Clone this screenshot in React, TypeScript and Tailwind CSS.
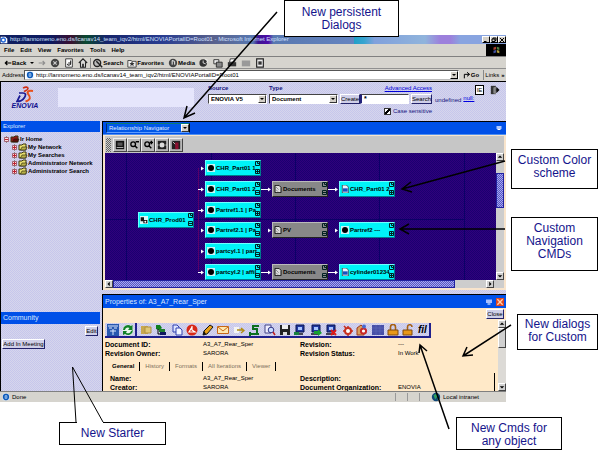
import React from "react";

type Kids = { children?: React.ReactNode };

const lavender =
  "bg-[conic-gradient(#c6c6ec_25%,#d6d6ec_0_50%,#c6c6ec_0_75%,#d6d6ec_0)] bg-[length:2px_2px]";
const thumb =
  "bg-[conic-gradient(#a0a0ff_25%,#5c5cb4_0_50%,#a0a0ff_0_75%,#5c5cb4_0)] bg-[length:2px_2px]";

/* ---------- small building blocks ---------- */

function Svg({ size = "size-3", children }: Kids & { size?: string }) {
  return (
    <svg viewBox="0 0 12 12" className={`${size} shrink-0`} aria-hidden="true" fill="none">
      {children}
    </svg>
  );
}

function DropDown({ id, label, value, className, dark }: { id: string; label: string; value: string; className: string; dark?: boolean }) {
  return (
    <div className={`relative flex ${className}`}>
      <select
        id={id}
        aria-label={label}
        className={`w-full appearance-none rounded-none pl-0.5 text-[6px] leading-[8px] outline-none ${
          dark
            ? "border border-t-[#0a7a70] border-r-black border-b-[#5c9cff] border-l-[#003070] bg-[#0058e8] text-[#e4eeff]"
            : "border border-t-[#444] border-r-white border-b-white border-l-[#444] bg-white font-bold text-black"
        }`}
      >
        <option>{value}</option>
      </select>
      <span className="pointer-events-none absolute inset-y-px right-px flex w-2 items-center justify-center border border-t-white border-r-[#333] border-b-[#333] border-l-white bg-[#d4d0c8]">
        <span className="border-x-2 border-t-2 border-x-transparent border-t-black" />
      </span>
    </div>
  );
}

function Push({ children, className = "" }: Kids & { className?: string }) {
  return (
    <button
      className={`border border-t-white border-r-[#22226a] border-b-[#22226a] border-l-white bg-[#cfcfe8] text-[6px] leading-[8px] whitespace-nowrap text-black ${className}`}
    >
      {children}
    </button>
  );
}

function ScrollButton({ dir }: { dir: "up" | "down" | "left" | "right" }) {
  const points = {
    up: "1,5 7,5 4,2",
    down: "1,3 7,3 4,6",
    left: "5,1 5,7 2,4",
    right: "3,1 3,7 6,4",
  }[dir];
  return (
    <button
      aria-label={`Scroll ${dir}`}
      className="flex size-2 shrink-0 items-center justify-center border border-t-white border-r-[#444] border-b-[#444] border-l-white bg-[#d0d0d0]"
    >
      <svg viewBox="0 0 8 8" className="size-1.5">
        <polygon points={points} fill="black" />
      </svg>
    </button>
  );
}

/* ---------- browser chrome ---------- */

function TitleBar() {
  return (
    <div className="flex h-[9px] items-center bg-[linear-gradient(90deg,#102060_0%,#0c1a60_10%,#3a1030_14%,#0a4a30_17%,#16246a_21%,#283c90_32%,#58608c_42%,#5878b0_50%,#3c1490_51%,#4c0ca8_53%,#5878b0_54%,#6484c0_70%,#7098cc_68%,#6c90c8_67%,#20a0c8_69%,#38a4d0_72%,#80a0dc_74%,#90b4dc_84%,#9c80dc_87%,#9c80dc_89%,#88a4e0_91%)] text-[#d4e0ff]">
      <Svg size="size-2">
        <path d="M1 1h7l3 3v7H1z" fill="#fff" />
        <circle cx="5" cy="6" r="3" stroke="#2468d8" strokeWidth="2" />
      </Svg>
      <span className="min-w-0 flex-1 pl-0.5 text-[6px] leading-[9px] whitespace-nowrap">
        http://lannomeno.eno.ds/lcanav14_team_iqv2/html/ENOVIAPortalID=Root01 - Microsoft Internet Explorer
      </span>
      <div className="flex">
        {["M2 9h5", "M2 4h6v5H2zM4 4V2h6v5H8", "M2 2l8 8M10 2l-8 8"].map((d) => (
          <button
            key={d}
            aria-label="Window control"
            className="flex h-[7px] w-2 items-center justify-center border border-t-white border-r-black border-b-black border-l-white bg-[#d4d0c8]"
          >
            <Svg size="size-1.5">
              <path d={d} stroke="black" strokeWidth="2" />
            </Svg>
          </button>
        ))}
      </div>
    </div>
  );
}

function MenuBar() {
  return (
    <div className="flex h-[13px] items-stretch border-b border-[#808080] bg-[#d6d4ce]">
      <nav className="flex flex-1 items-center gap-1.5 pl-1">
        {["File", "Edit", "View", "Favorites", "Tools", "Help"].map((m) => (
          <button key={m} className="text-[6px] leading-[8px] font-bold">
            {m}
          </button>
        ))}
      </nav>
      <div className="flex w-5 items-center justify-center bg-black">
        <Svg size="size-2.5">
          <path d="M3 3l3-1v3L3 6z" fill="#b04030" />
          <path d="M7 2l3 1v3L7 5z" fill="#508040" />
          <path d="M3 7l3-1v3l-3 1z" fill="#4050a0" />
          <path d="M7 6l3 1v3L7 9z" fill="#b0a040" />
        </Svg>
      </div>
    </div>
  );
}

function ToolItem({ label, children }: Kids & { label?: string }) {
  return (
    <button className="flex items-center text-[6px] leading-[8px] font-bold" aria-label={label ?? "Tool"}>
      {children}
      {label}
    </button>
  );
}

function NavBar() {
  return (
    <div className="flex h-3 items-center gap-1 border-b border-[#909090] bg-[#d6d4ce] pl-1">
      <ToolItem label="Back">
        <Svg size="size-2">
          <path d="M11 6H2M5 3L2 6l3 3" stroke="black" strokeWidth="1.8" />
        </Svg>
      </ToolItem>
      <span className="border-x-2 border-t-2 border-x-transparent border-t-black" />
      <Svg size="size-2">
        <path d="M1 6h9M7 3l3 3-3 3" stroke="#909090" strokeWidth="1.8" />
      </Svg>
      <ToolItem>
        <Svg size="size-2.5">
          <circle cx="6" cy="6" r="5" fill="#444" />
          <path d="M4 4l4 4M8 4L4 8" stroke="#ccc" strokeWidth="1.4" />
        </Svg>
      </ToolItem>
      <ToolItem>
        <Svg size="size-2.5">
          <path d="M2 1h8v10H2z" fill="#fff" stroke="#222" />
          <path d="M4 7a2 2 0 104-1M8 3v3H5" stroke="#222" strokeWidth="1.3" />
        </Svg>
      </ToolItem>
      <ToolItem>
        <Svg size="size-2.5">
          <path d="M1 6l5-5 5 5M3 5v6h6V5" fill="#ddd" stroke="#222" strokeWidth="1.3" />
          <path d="M5 7h2v4H5z" fill="#222" />
        </Svg>
      </ToolItem>
      <span className="-mx-0.5 h-2.5 w-px bg-[#888]" />
      <ToolItem label="Search">
        <Svg size="size-2.5">
          <circle cx="5" cy="6" r="4.2" fill="#bbb" stroke="#222" strokeWidth="1.6" />
          <path d="M4 4l3 3M7 7l4 4" stroke="#222" strokeWidth="1.8" />
        </Svg>
      </ToolItem>
      <ToolItem label="Favorites">
        <Svg size="size-2.5">
          <path d="M1 3h4l1 1h5v7H1z" fill="#eee" stroke="#333" />
          <path d="M6 4l1 2h2L7.500 7.500 8 10 6 8.500 4 10l.5-2.500L3 6h2z" fill="#333" />
        </Svg>
      </ToolItem>
      <ToolItem label="Media">
        <Svg size="size-2.5">
          <circle cx="6" cy="6" r="5" fill="#444" />
          <path d="M5 3v5M5 3l3 1v4" stroke="#eee" strokeWidth="1.2" />
        </Svg>
      </ToolItem>
      <ToolItem>
        <Svg size="size-2.5">
          <circle cx="5" cy="6" r="4.500" fill="#333" />
          <path d="M5 3v3l3 1M7 1l4 2-2 3" stroke="#eee" />
        </Svg>
      </ToolItem>
      <ToolItem>
        <Svg size="size-2.5">
          <path d="M1 2h6v5H1z" fill="#eee" stroke="#222" />
          <path d="M4 5h7v6H4z" fill="#888" stroke="#222" />
        </Svg>
      </ToolItem>
      <ToolItem>
        <Svg size="size-2.5">
          <path d="M4 1h6L9 5H3z" fill="#fff" stroke="#222" />
          <path d="M1 5h10v5H1z" fill="#333" />
        </Svg>
      </ToolItem>
      <ToolItem>
        <Svg size="size-2.5">
          <path d="M1 3h10v7H1z" fill="#999" />
        </Svg>
      </ToolItem>
      <ToolItem>
        <Svg size="size-2.5">
          <path d="M2 1h8v10H2z" fill="#eee" stroke="#222" strokeWidth="1.4" />
          <path d="M4 4h4v4H4z" fill="#333" />
        </Svg>
      </ToolItem>
    </div>
  );
}

function IeIcon() {
  return (
    <Svg size="size-2">
      <path d="M1 1h9l1 2v8H1z" fill="#cfe4ff" />
      <circle cx="6" cy="6" r="3.600" stroke="#0a58b8" strokeWidth="2.200" />
      <path d="M3 6h6" stroke="#0a58b8" strokeWidth="1.400" />
    </Svg>
  );
}

function AddressBar() {
  return (
    <div className="flex h-3 items-center bg-[#d6d4ce] pl-0.5">
      <label htmlFor="address" className="w-[22px] text-[6px] leading-[8px]">
        Address
      </label>
      <div className="flex h-2.5 min-w-0 flex-1 items-center gap-0.5 border border-t-[#555] border-r-white border-b-[#bbb] border-l-[#555] bg-white pl-px">
        <IeIcon />
        <input
          id="address"
          readOnly
          defaultValue="http://lannomeno.eno.ds/lcanav14_team_iqv2/html/ENOVIAPortalID=Root01"
          className="h-2 min-w-0 flex-1 bg-transparent text-[6px] leading-[8px] outline-none"
        />
        <button
          aria-label="Show addresses"
          className="flex size-2 items-center justify-center border border-t-white border-r-black border-b-black border-l-white bg-[#d4d0c8]"
        >
          <span className="border-x-2 border-t-2 border-x-transparent border-t-black" />
        </button>
      </div>
      <button className="flex w-6 items-center justify-center text-[6px] leading-[8px] font-bold">
        <Svg size="size-2">
          <path d="M2 11V5h7M6 2l4 3-4 3" stroke="black" strokeWidth="1.500" />
        </Svg>
        Go
      </button>
      <button className="flex h-2.5 w-[23px] items-center justify-center gap-0.5 border-l border-[#888] text-[6px] leading-[8px]">
        Links <span className="font-bold">»</span>
      </button>
    </div>
  );
}

/* ---------- application header ---------- */

function Logo() {
  return (
    <div className="flex w-8 flex-col items-center text-[#10108c]">
      <svg viewBox="0 0 18 17" className="h-[17px] w-[18px]" fill="none" aria-hidden="true">
        <path d="M7 2c3-1.500 5-1 5 .5C12 4 9.500 4.500 8 5.500" stroke="#d03018" strokeWidth="1.600" />
        <path d="M3 7h4c3 0 3 2 1.500 4.500S4 15.500 1 15.500l3-6" stroke="#1c1c94" strokeWidth="1.700" />
        <path d="M17 5c-5-1-6.500 1-4.500 3.500S15 14 9.500 15.500" stroke="#e8501c" strokeWidth="2" />
      </svg>
      <span className="text-[7px] leading-[6px] font-bold italic">ENOVIA</span>
    </div>
  );
}

function AppHeader() {
  const label = "text-[6px] leading-[8px] font-bold text-[#14147c]";
  return (
    <header className={`flex h-10 border-t border-l border-black ${lavender}`}>
      <div className="w-[57px] pt-1 pl-2">
        <Logo />
      </div>
      <div className="mt-1.5 h-[19px] min-w-0 flex-1 bg-[#e6e6fc]" />
      <form className="ml-3.5 w-[224px]" onSubmit={(e) => e.preventDefault()}>
        <div className="flex pt-0.5">
          <label htmlFor="source" className={`w-[61px] ${label}`}>
            Source
          </label>
          <label htmlFor="type" className={`flex-1 ${label}`}>
            Type
          </label>
          <a href="#advanced" className="text-[6px] leading-[8px] text-[#0000d8] underline">
            Advanced Access
          </a>
        </div>
        <div className="mt-0.5 flex h-2.5 items-stretch">
          <DropDown id="source" label="Source" value="ENOVIA V5" className="w-[59px]" />
          <DropDown id="type" label="Type" value="Document" className="ml-0.5 w-[69px]" />
          <Push className="ml-0.5 w-5">Create</Push>
          <input
            aria-label="Search text"
            defaultValue="*"
            className="min-w-0 flex-1 rounded-none border border-l-2 border-t-[#444] border-r-white border-b-white border-l-[#22227a] bg-white px-0.5 text-[7px] font-bold outline-none"
          />
          <Push className="ml-0.5 w-[21px]">Search</Push>
        </div>
        <div className="mt-[3px] flex items-center justify-end gap-0.5">
          <input
            id="case"
            type="checkbox"
            defaultChecked
            className="size-[7px] appearance-none border border-[#333] bg-white bg-[linear-gradient(135deg,transparent_35%,black_35%_65%,transparent_65%)]"
          />
          <label htmlFor="case" className="text-[6px] leading-[8px] text-[#14147c]">
            Case sensitive
          </label>
        </div>
      </form>
      <div className="flex w-[74px] items-start pr-1.5 pl-[3px]">
        <span className="pt-3.5 text-[6px] leading-[8px] text-[#14147c]">undefined</span>
        <a href="#null" className="pt-3 pl-0.5 text-[6px] leading-[8px] text-[#0000e0] underline">
          null:
        </a>
        <button className="mt-[3px] ml-auto flex h-2.5 w-[9px] items-center justify-center border border-black bg-white text-[6px] leading-[8px]">
          IE
        </button>
        <button aria-label="Exit" className="mt-[3px] ml-1.5">
          <Svg size="size-2.5">
            <path d="M1 1h6v10H1z" fill="#333" />
            <path d="M4 3l3-1v9l-3-1z" fill="#888" />
            <path d="M7 6h2M8 3l3 3-3 3z" fill="#111" stroke="#111" />
          </Svg>
        </button>
      </div>
    </header>
  );
}

/* ---------- left column ---------- */

function Expander({ open }: { open?: boolean }) {
  return (
    <svg viewBox="0 0 7 7" className="size-[7px] shrink-0" aria-hidden="true">
      <path d="M3.500 0v7" stroke="#888" />
      <path d="M1.500 1.500h4v4h-4z" fill="#fbdcdc" stroke="#a06070" />
      <path d={open ? "M2 3.500h3" : "M2 3.500h3M3.500 2v3"} stroke="#c02030" />
    </svg>
  );
}

function Folder({ red }: { red?: boolean }) {
  return (
    <svg viewBox="0 0 10 8" className="h-2 w-2.5 shrink-0" aria-hidden="true">
      <path d="M1 2h3l1-1h3v6H1z" fill={red ? "#901818" : "#e8e070"} stroke="#3a3410" />
      <path d="M2.500 7l1.500-3h5L7.500 7z" fill={red ? "#5c0c0c" : "#b8b048"} stroke="#201c08" strokeWidth=".6" />
    </svg>
  );
}

function Explorer() {
  return (
    <section className="flex flex-1 flex-col">
      <h2 className="h-[11px] bg-[#0050e8] pl-0.5 text-[6px] leading-[11px] text-[#dce8ff]">Explorer</h2>
      <ul className="pt-[3px] text-[6px] leading-[8px] font-bold whitespace-nowrap">
        <li>
          <div className="flex h-2 items-center pl-0.5">
            <Expander open />
            <Folder red />
            Ir Home
          </div>
          <ul>
            {["My Network", "My Searches", "Administrator Network", "Administrator Search"].map((t) => (
              <li key={t} className="flex h-2 items-center pl-2.5">
                <Expander />
                <Folder />
                {t}
              </li>
            ))}
          </ul>
        </li>
      </ul>
    </section>
  );
}

function Community() {
  return (
    <section className="h-[79px]">
      <h2 className="h-3 bg-[#0050e8] pl-0.5 text-[7px] leading-3 text-[#dce8ff]">Community</h2>
      <div className="flex justify-end pt-0.5 pr-0.5">
        <Push className="h-2.5 w-[13px]">Edit</Push>
      </div>
      <Push className="mt-[3px] ml-px block h-2.5 w-[43px]">Add In Meeting</Push>
    </section>
  );
}

/* ---------- navigator ---------- */

type GraphNode = { x: number; y: number; text: string; kind: "part" | "doc" | "grey" | "root"; plus?: boolean };

const nodes: GraphNode[] = [
  { x: 33, y: 59, text: "CHR_Prod01", kind: "root" },
  { x: 100, y: 7, text: "CHR_Part01 1", kind: "part", plus: true },
  { x: 100, y: 28, text: "CHR_Part01 2", kind: "part" },
  { x: 100, y: 49, text: "Partref1.1 | Pa", kind: "part", plus: true },
  { x: 100, y: 69, text: "Partref2.1 | Pa", kind: "part" },
  { x: 100, y: 90, text: "partcyl.1 | part", kind: "part" },
  { x: 100, y: 111, text: "partcyl.2 | affil", kind: "part" },
  { x: 167, y: 28, text: "Documents", kind: "grey" },
  { x: 167, y: 69, text: "PV", kind: "grey" },
  { x: 167, y: 111, text: "Documents", kind: "grey" },
  { x: 234, y: 28, text: "CHR_Part01 2", kind: "doc", plus: true },
  { x: 234, y: 69, text: "Partref2 ---", kind: "part", plus: true },
  { x: 234, y: 111, text: "cylinder01234", kind: "doc", plus: true },
];

const nodeIcons: Record<GraphNode["kind"], React.ReactNode> = {
  part: (
    <>
      <path d="M0 0h12v12H0z" fill="#c8f4f4" />
      <circle cx="6" cy="6" r="4.500" fill="#000" />
    </>
  ),
  doc: (
    <>
      <path d="M2 0h6l3 3v9H2z" fill="#e8f4ff" stroke="#222" />
      <path d="M3 5h7v5H3z" fill="#1850c0" />
    </>
  ),
  grey: (
    <>
      <path d="M1.500.5h6l3 3v8h-9z" fill="#ddd" stroke="#111" strokeWidth="1.500" />
      <path d="M3 3l4 4M3 7l3 3" stroke="#666" />
    </>
  ),
  root: (
    <>
      <path d="M0 0h12v12H0z" fill="#d8f8f8" />
      <path d="M1 2h5v6H1zM5 6h6v5H5z" fill="#111" />
      <circle cx="8" cy="8.500" r="1.500" fill="#fff" />
    </>
  ),
};

function NodeBox({ n }: { n: GraphNode }) {
  const grey = n.kind === "grey";
  return (
    <button
      style={{ left: n.x, top: n.y }}
      className={`absolute flex h-4 w-14 items-center border pl-px text-left ${
        grey
          ? "border-t-[#bbb] border-r-[#222] border-b-[#222] border-l-[#bbb] bg-[#888]"
          : "border-t-[#70ffff] border-r-[#007a8c] border-b-[#007a8c] border-l-[#70ffff] bg-[#00f4f8]"
      }`}
    >
      <Svg size="size-2">{nodeIcons[n.kind]}</Svg>
      <span className="min-w-0 flex-1 pl-px text-[6px] leading-[9px] font-bold whitespace-nowrap">{n.text}</span>
      <svg viewBox="0 0 5 14" className="h-3.5 w-[5px] shrink-0" fill="none" aria-hidden="true">
        <path d="M.5.5h4v4h-4zM2.500.5v2h2M.5 8.500h4v4h-4zM1 10.500h3" stroke="#022" />
        {n.plus && <path d="M2.500 9v3" stroke="#022" />}
      </svg>
    </button>
  );
}

function GraphCanvas() {
  return (
    <div className="relative h-[127px] min-w-0 flex-1 overflow-hidden bg-[conic-gradient(#30007c_25%,#1a0070_0_50%,#30007c_0_75%,#1a0070_0)] bg-[length:2px_2px]">
      <svg className="absolute inset-0 size-full" fill="none" aria-hidden="true">
        <path d="M21.500 0v127M106.500 0v127M190.500 0v127M274.500 0v127M359.500 0v127M0 66.500h359" stroke="#0c0068" />
        <path d="M93.500 15v103" stroke="#580068" />
        <path d="M93 36.500h4M93 57.500h4M93 119.500h4M155 36.500h9M155 119.500h9M223 36.500h8M223 119.500h8" stroke="#fff" />
        {[
          [96, 15], [96, 36], [96, 57], [96, 77], [96, 98], [96, 119],
          [163, 36], [163, 77], [163, 119], [230, 36], [230, 77], [230, 119],
        ].map(([x, y]) => (
          <path key={`${x}-${y}`} d={`M${x} ${y - 1.5}l3 2-3 2z`} fill="#fff" />
        ))}
      </svg>
      {nodes.map((n) => (
        <NodeBox key={`${n.x}-${n.y}`} n={n} />
      ))}
    </div>
  );
}

function Navigator() {
  const tools = [
    <g key="a"><path d="M1 1h10v10H1z" fill="#111" /><path d="M3 3h6v4H3z" fill="#555" /><path d="M2 9h8" stroke="#ccc" /></g>,
    <g key="b"><circle cx="5" cy="5" r="2.800" stroke="#000" strokeWidth="1.600" /><path d="M7 7l3 3M8 2h4" stroke="#000" strokeWidth="1.800" /></g>,
    <g key="c"><circle cx="5" cy="5" r="2.800" stroke="#000" strokeWidth="1.600" /><path d="M7 7l3 3M8 3h4M10 1v4" stroke="#000" strokeWidth="1.600" /></g>,
    <g key="d"><path d="M1 1h10v10H1z" fill="#222" /><circle cx="6" cy="6" r="3" fill="#ddd" /><path d="M0 6h2M10 6h2" stroke="#ddd" /></g>,
    <g key="e"><path d="M1 1h10v10H1z" fill="#222" /><path d="M5 3h4v8H5z" fill="#8c1030" /><path d="M2 2l3 3" stroke="#ddd" /></g>,
  ];
  return (
    <section className="border-t border-l border-black bg-[#f8e4cc]">
      <div className="flex h-[13px] items-center justify-between border-b border-[#5090f0] bg-[#0050e8] pr-1 pl-[3px]">
        <DropDown dark id="view" label="View" value="Relationship Navigator" className="w-[84px]" />
        <Svg size="size-1.5">
          <path d="M1 2h10v6H1z" fill="#b0c8ff" />
          <path d="M3 9h6" stroke="#fff" strokeWidth="2" />
        </Svg>
      </div>
      <div className="px-0.5 pt-px pb-0.5">
        <div className="flex h-[17px] items-center bg-[#c6c6c6]">
          <span className="mr-0.5 ml-px h-3.5 w-[5px] bg-[conic-gradient(#666_25%,#ccc_0_50%,#666_0_75%,#ccc_0)] bg-[length:2px_2px]" />
          {tools.map((t, i) => (
            <button
              key={i}
              aria-label={`View tool ${i + 1}`}
              className="flex h-3.5 w-[14px] items-center justify-center border border-t-[#eee] border-r-[#444] border-b-[#444] border-l-[#eee] bg-[#b8b8b8]"
            >
              <Svg size="size-2.5">{t}</Svg>
            </button>
          ))}
        </div>
        <div className="flex">
          <GraphCanvas />
          <div className="flex w-2 flex-col bg-[#cdcdcd]">
            <ScrollButton dir="up" />
            <div className="h-3" />
            <div className={`h-[35px] border border-[#2020a0] ${thumb}`} />
            <div className="flex-1" />
            <ScrollButton dir="down" />
          </div>
        </div>
        <div className="flex h-2 bg-[#cdcdcd]">
          <ScrollButton dir="left" />
          <div className={`flex-1 border border-[#2020a0] ${thumb}`} />
          <div className="w-[31px]" />
          <ScrollButton dir="right" />
          <div className="w-2.5" />
        </div>
      </div>
    </section>
  );
}

/* ---------- properties dialog ---------- */

const pc = (
  <>
    <path d="M2 1h8v7H2z" fill="#2038a0" stroke="#0c1450" />
    <path d="M4 3h4v3H4z" fill="#a8c4ff" />
    <path d="M1 9h8v2H1z" fill="#445" />
  </>
);

const commandIcons: React.ReactNode[] = [
  <g key="paste"><path d="M1 2h7v8H1z" fill="#c8a850" /><path d="M5 3h6v6H5z" fill="#e0c878" stroke="#b09040" /></g>,
  <g key="tree"><path d="M1 1h4l2 3-3 2-3-1z" fill="#108020" /><path d="M4 5h6v3H4z" fill="#208030" /><path d="M5 8h6v3H5z" fill="#101860" /><path d="M3 5v5h2" stroke="#000" /></g>,
  <g key="copy"><path d="M2 1h4l2 2v5H2z" fill="#dde4ff" stroke="#3040b0" /><path d="M5 4h4l2 2v5H5z" fill="#f4f6ff" stroke="#3040b0" /></g>,
  <g key="clock"><circle cx="6" cy="6" r="5.500" fill="#d82818" /><path d="M6 2v4l3 2H3l3-5" stroke="#fff" strokeWidth="1.200" /></g>,
  <g key="pencil"><path d="M1 11l1-4 6-6 3 2-6 7z" fill="#e8a018" stroke="#111" /><path d="M1 11l1-4 2 3z" fill="#111" /></g>,
  <g key="mail"><path d="M.5 2.500h11v7H.5z" fill="#ffe8b0" stroke="#c86818" /><path d="M1 3l5 4 5-4" stroke="#c86818" /></g>,
  <g key="out"><path d="M1 3h5v6H1z" fill="#f4f4f4" /><path d="M4 6h6M8 4l3 2.500L8 9" stroke="#b08c10" strokeWidth="1.400" /></g>,
  <g key="flow"><path d="M2 10h7V5H5V2h6M9 10H11M2 8v4" stroke="#0c7020" strokeWidth="2" /></g>,
  <g key="find"><path d="M1 1h6v8H1z" fill="#eef" stroke="#444488" /><circle cx="7" cy="6" r="2.800" fill="#c8dcff" stroke="#333388" /><path d="M9 8l2 3" stroke="#c02020" strokeWidth="1.500" /></g>,
  <g key="save"><path d="M1 1h10v10H1z" fill="#222" /><path d="M3 1h6v4H3z" fill="#eee" /><path d="M4 8h4v3H4z" fill="#ddd" /></g>,
  <g key="pc1">{pc}<path d="M0 8h5v3H0z" fill="#188040" /></g>,
  <g key="pc2">{pc}<path d="M4 7h4V5l4 4-4 3v-2H4z" fill="#18a030" /></g>,
  <g key="pc3">{pc}<path d="M6 6l5 5M11 6l-5 5" stroke="#e01818" strokeWidth="2" /></g>,
  <g key="gear"><circle cx="7" cy="7" r="3" fill="#fff" stroke="#c83020" strokeWidth="2" /><path d="M3 2l2 2M7 2v2M2 7h2M7 10v2M10 7h2" stroke="#c83020" strokeWidth="1.500" /></g>,
  <g key="gears"><path d="M1 4l4-3 3 3v7H1z" fill="#d8a060" stroke="#a03818" /><circle cx="7.500" cy="7" r="2.600" fill="#fff" stroke="#c82828" strokeWidth="2" /><circle cx="8" cy="2.500" r="2" fill="#4868d0" /></g>,
  <g key="grid"><path d="M0 1h12v10H0z" fill="#4850a8" /><path d="M0 4h12M0 7h12M4 1v10M8 1v10" stroke="#6068b8" strokeWidth=".6" /></g>,
  <g key="lock"><path d="M3.500 6V3a2.500 2.500 0 015 0v3" stroke="#a86010" strokeWidth="1.600" /><path d="M1 6h10v5H1z" fill="#e89818" stroke="#80480c" /></g>,
  <g key="unlock"><path d="M5.500 6V3a2.200 2.200 0 014.500 0" stroke="#a86010" strokeWidth="1.600" /><path d="M1 6h9v5H1z" fill="#e89818" stroke="#80480c" /></g>,
];

function CommandBar() {
  return (
    <div className="flex">
      <div className={`flex h-[15px] w-8 items-center justify-around border-r-2 border-b-2 border-[#20208c] ${lavender}`}>
        <button aria-label="Home view">
          <Svg>
            <path d="M0 0h12v12H0z" fill="#2858b0" />
            <path d="M1 2h10M2 4h3M7 4h3M3 7h6M6 5v6" stroke="#dce8ff" />
          </Svg>
        </button>
        <button aria-label="Refresh">
          <Svg>
            <circle cx="6" cy="6" r="5.500" fill="#e8f8e8" />
            <path d="M1 6a5 5 0 018-4l1.500-1v5H6l1.500-2A3 3 0 003 6zM11 6a5 5 0 01-8 4l-2 1V7h4L4 8.500A3 3 0 009 7z" fill="#108028" />
          </Svg>
        </button>
      </div>
      <div className={`flex h-[15px] w-[294px] items-center justify-between border-r-2 border-b-2 border-[#20208c] pr-0.5 pl-[3px] ${lavender}`}>
        {commandIcons.map((icon, i) => (
          <button key={i} aria-label={`Command ${i + 1}`}>
            <Svg>{icon}</Svg>
          </button>
        ))}
        <button className="text-[10px] leading-3 font-bold italic">fil</button>
      </div>
    </div>
  );
}

function Field({ a, av, b, bv, inset }: { a: string; av: string; b: string; bv: string; inset?: boolean }) {
  return (
    <div className="grid grid-cols-[98px_97px_98px_1fr] text-[7px] leading-[9px]">
      <dt className={`font-bold ${inset ? "pl-[5px]" : ""}`}>{a}</dt>
      <dd className="text-[6px]">{av}</dd>
      <dt className="font-bold">{b}</dt>
      <dd className="text-[6px]">{bv}</dd>
    </div>
  );
}

function Properties() {
  return (
    <section className="mt-1 flex flex-1 flex-col border-t border-l border-black bg-[#ffe9c8]">
      <div className="flex h-[13px] shrink-0 items-center gap-1 bg-[#0050e8] pr-0.5 pl-0.5">
        <h2 className="flex-1 text-[7px] leading-[13px] text-[#dce8ff]">Properties of: A3_A7_Rear_Sper</h2>
        <button aria-label="Restore">
          <Svg size="size-1.5">
            <path d="M0 1h12v7H0z" fill="#a8c0ff" />
            <path d="M3 10h6" stroke="#fff" strokeWidth="2" />
          </Svg>
        </button>
        <button aria-label="Close window">
          <Svg size="size-2">
            <path d="M0 0h12v12H0z" fill="#e04820" />
            <path d="M2 2l8 8M10 2l-8 8" stroke="#ffd0b0" strokeWidth="2" />
          </Svg>
        </button>
      </div>
      <div className="flex h-3 justify-end pt-px pr-0.5 pb-px">
        <Push className="w-[18px]">Close</Push>
      </div>
      <div className="flex h-[71px] overflow-hidden">
        <div className="min-w-0 flex-1 pt-[3px] pl-0.5">
          <CommandBar />
          <dl className="pt-0.5">
            <Field a="Document ID:" av="A3_A7_Rear_Sper" b="Revision:" bv="---" />
            <Field a="Revision Owner:" av="SARORA" b="Revision Status:" bv="In Work" />
          </dl>
          <div role="tablist" className="flex h-4 items-center pl-0.5 text-[6px] leading-[9px]">
            {["General", "History", "Formats", "All Iterations", "Viewer"].map((t, i) => (
              <button
                key={t}
                role="tab"
                aria-selected={i === 0}
                className={`border-r border-black px-[5px] ${i === 0 ? "font-bold text-black" : "text-[#7c705c]"}`}
              >
                {t}
              </button>
            ))}
          </div>
          <dl>
            <Field inset a="Name:" av="A3_A7_Rear_Sper" b="Description:" bv="" />
            <Field inset a="Creator:" av="SARORA" b="Document Organization:" bv="ENOVIA" />
          </dl>
        </div>
        <span className="mr-[3px] h-[18px] w-px self-end bg-black" />
        <div className="flex w-2 flex-col bg-[#dcdad6]">
          <ScrollButton dir="up" />
          <div className="h-5 border border-t-white border-r-[#444] border-b-[#444] border-l-white bg-[#d0d0d0]" />
          <div className="flex-1" />
          <ScrollButton dir="down" />
        </div>
      </div>
    </section>
  );
}

function StatusBar() {
  return (
    <footer className="flex h-[11px] items-center border-t border-[#808080] bg-[#d6d4ce] pl-0.5 text-[6px] leading-[9px]">
      <IeIcon />
      <span className="flex-1 pl-0.5">Done</span>
      <span className="h-2 w-3 border-l border-[#999]" />
      <span className="h-2 w-3 border-l border-[#999]" />
      <span className="h-2 w-3 border-l border-[#999]" />
      <Svg size="size-2.5">
        <circle cx="6" cy="6" r="5" fill="#104878" />
        <path d="M3 4l3-2 2 3-3 4zM8 7l2 1-2 2z" fill="#30a060" />
      </Svg>
      <span className="w-[65px] pl-0.5">Local intranet</span>
    </footer>
  );
}

/* ---------- annotations over the window ---------- */

function Note({ className, children }: Kids & { className: string }) {
  return (
    <div
      className={`absolute border border-black bg-white text-center text-[12px] leading-[13px] text-[#14148c] ${className}`}
    >
      <p className="h-full overflow-hidden">{children}</p>
    </div>
  );
}

function Annotations() {
  return (
    <>
      <svg className="pointer-events-none absolute top-0 left-0 h-[450px] w-[599px]" fill="none" stroke="black" aria-hidden="true">
        <path d="M277 12L184 118M195 113l-11 5 3-12" strokeWidth="1.500" />
        <path d="M505 161L402 189M411 182l-9 7 10 3" strokeWidth="1.500" />
        <path d="M505 229L400 229M409 224l-9 5 9 5" strokeWidth="1.500" />
        <path d="M511 325L463 356M467 347l-4 9 10-1" strokeWidth="1.500" />
        <path d="M449 429L420 345M419 353l1-8 7 6" strokeWidth="1.500" />
        <path d="M76 422L72.500 367L103 422" />
      </svg>
      <Note className="top-0 left-[284px] h-[37px] w-[115px] px-4 pt-[5px]">New persistent Dialogs</Note>
      <Note className="top-[149px] left-[511px] h-10 w-[87px] pt-1">Custom Color scheme</Note>
      <Note className="top-[217px] left-[511px] h-[54px] w-[87px] px-3 pt-1">Custom Navigation CMDs</Note>
      <Note className="top-[314px] left-[517px] h-9 w-[81px] px-1 pt-[3px]">New dialogs for Custom</Note>
      <Note className="top-[417px] left-[456px] h-[33px] w-[106px] px-3 pt-1 pb-px">New Cmds for any object</Note>
      <Note className="top-[422px] left-[59px] h-[23px] w-[107px] pt-1">New Starter</Note>
      <span className="absolute top-[422px] left-[77px] h-px w-[26px] bg-white" />
    </>
  );
}

export default function App() {
  return (
    <div className="relative min-h-[450px] overflow-hidden bg-white pt-[35px] font-['Liberation_Sans',Arial,sans-serif] text-black">
      <main className="mr-[93px]">
        <TitleBar />
        <MenuBar />
        <NavBar />
        <AddressBar />
        <AppHeader />
        <div className={`flex ${lavender}`}>
          <aside className="mr-0.5 flex w-[100px] flex-col border-l border-black">
            <Explorer />
            <Community />
          </aside>
          <div className="flex min-w-0 flex-1 flex-col">
            <Navigator />
            <Properties />
          </div>
        </div>
        <StatusBar />
      </main>
      <Annotations />
    </div>
  );
}
